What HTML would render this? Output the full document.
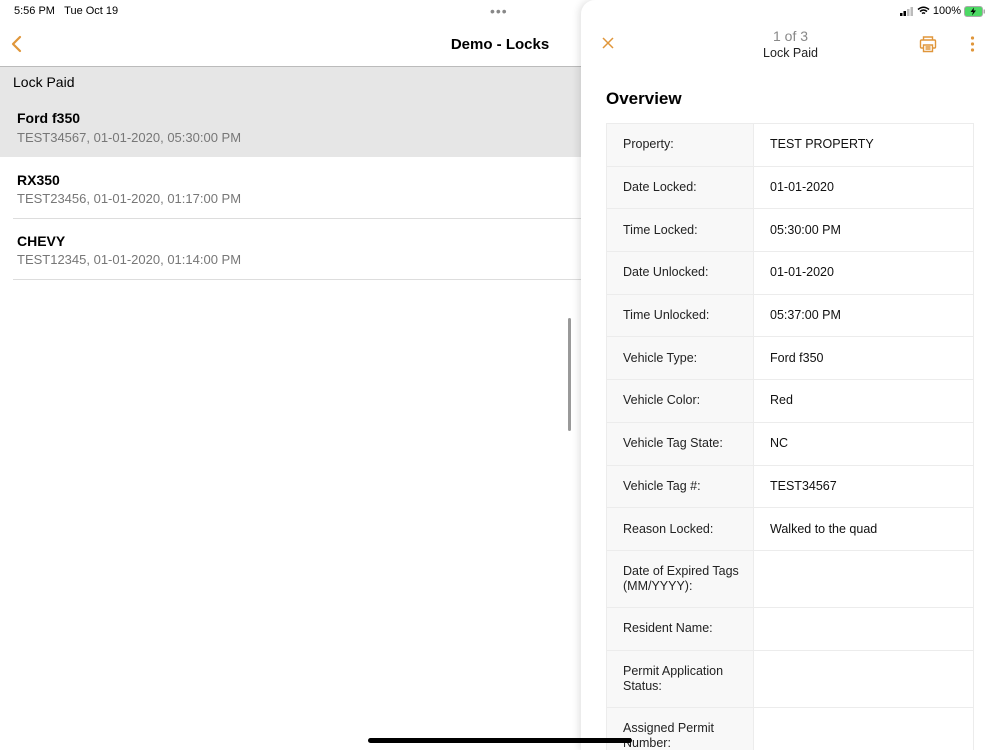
<!DOCTYPE html>
<html><head><meta charset="utf-8"><style>
*{margin:0;padding:0;box-sizing:border-box}
body{width:1000px;height:750px;overflow:hidden;background:#fff;font-family:"Liberation Sans",Helvetica,Arial,sans-serif;position:relative;color:#000}
.abs{position:absolute}
.row{position:absolute;left:0;width:581px;height:61px}
.row .t{position:absolute;left:17px;top:10px;font-size:14px;font-weight:bold}
.row .s{position:absolute;left:17px;top:30px;font-size:13px;color:#777}
.sep{position:absolute;left:13px;width:568px;height:1px;background:#ddd}
#panel{position:absolute;left:581px;top:0;width:419px;height:750px;overflow:hidden;background:#fff;border-top-left-radius:14px;box-shadow:-2px 0 8px rgba(0,0,0,.12)}
table{position:absolute;left:25px;top:123px;width:368px;border-collapse:collapse;font-size:12.5px;table-layout:fixed}
td{border:1px solid #ececec;padding:0 6px 0 16px;height:42.7px;vertical-align:middle;line-height:15px}
td.l{width:147px;background:#f8f8f8;color:#222}
td.v{color:#111}
</style></head><body>
<div class="abs" style="left:14px;top:5px;font-size:11px">5:56 PM&nbsp;&nbsp;&nbsp;Tue Oct 19</div>
<div class="abs" style="left:490px;top:3px;font-size:14px;color:#888;letter-spacing:1px">•••</div>
<svg class="abs" style="left:9px;top:35px" width="14" height="18" viewBox="0 0 14 18"><path d="M11 2 L4 9 L11 16" fill="none" stroke="#e0963a" stroke-width="2.2" stroke-linecap="round" stroke-linejoin="round"/></svg>
<div class="abs" style="left:0;width:1000px;top:36px;text-align:center;font-size:15px;font-weight:bold">Demo - Locks</div>
<div class="abs" style="left:0;top:66px;width:581px;height:1px;background:#bbb"></div>
<div class="abs" style="left:0;top:67px;width:581px;height:90px;background:#e6e6e6"></div>
<div class="abs" style="left:13px;top:74px;font-size:14px">Lock Paid</div>
<div class="row" style="top:100px"><div class="t">Ford f350</div><div class="s">TEST34567, 01-01-2020, 05:30:00 PM</div></div>
<div class="row" style="top:157px;background:#fff"><div class="t" style="top:15px">RX350</div><div class="s" style="top:34px">TEST23456, 01-01-2020, 01:17:00 PM</div></div>
<div class="sep" style="top:218px"></div>
<div class="row" style="top:218px"><div class="t" style="top:15px">CHEVY</div><div class="s" style="top:34px">TEST12345, 01-01-2020, 01:14:00 PM</div></div>
<div class="sep" style="top:279px"></div>
<div class="abs" style="left:568px;top:318px;width:3px;height:113px;background:#999;border-radius:2px"></div>
<div id="panel">
<div class="abs" style="right:14px;top:5px;font-size:11px;display:flex;align-items:center;gap:3px">
<svg width="14" height="9"><rect x="0" y="6" width="2.5" height="3" fill="#000"/><rect x="3.5" y="4" width="2.5" height="5" fill="#000"/><rect x="7" y="2" width="2.5" height="7" fill="#bbb"/><rect x="10.5" y="0" width="2.5" height="9" fill="#bbb"/></svg>
<svg width="13" height="10" viewBox="0 0 13 10"><path d="M1 3.5 Q6.5 -1 12 3.5 M3 5.5 Q6.5 2.5 10 5.5 M5 7.5 Q6.5 6.2 8 7.5" fill="none" stroke="#000" stroke-width="1.5"/></svg>
<span>100%</span>
<svg width="22" height="11"><rect x="0.5" y="0.5" width="18" height="10" rx="2.5" fill="#4cd964" stroke="#aaa"/><rect x="19.5" y="3.5" width="1.5" height="4" fill="#aaa"/><path d="M10 1.5 L6.5 6 H9 L8 9.5 L12 4.5 H9.5 Z" fill="#000"/></svg>
</div>
<svg class="abs" style="left:21px;top:37px" width="12" height="12"><path d="M1 1 L11 11 M11 1 L1 11" stroke="#e0963a" stroke-width="1.5"/></svg>
<div class="abs" style="left:0;width:419px;top:28px;text-align:center;font-size:14px;color:#888">1 of 3</div>
<div class="abs" style="left:0;width:419px;top:46px;text-align:center;font-size:12.5px;color:#222">Lock Paid</div>
<svg class="abs" style="left:338px;top:35px" width="18" height="18" viewBox="0 0 18 18"><path d="M4.5 5 V2 H13.5 V5 M4.5 13 H2.5 A1 1 0 0 1 1.5 12 V6 A1 1 0 0 1 2.5 5 H15.5 A1 1 0 0 1 16.5 6 V12 A1 1 0 0 1 15.5 13 H13.5 M4.5 10 H13.5 V16.5 H4.5 Z M6.5 12 H11.5 M6.5 14 H11.5" fill="none" stroke="#e0963a" stroke-width="1.4"/></svg>
<svg class="abs" style="left:389px;top:36px" width="5" height="17"><circle cx="2.5" cy="2" r="1.6" fill="#e0963a"/><circle cx="2.5" cy="8" r="1.6" fill="#e0963a"/><circle cx="2.5" cy="14" r="1.6" fill="#e0963a"/></svg>
<div class="abs" style="left:25px;top:89px;font-size:17px;font-weight:bold">Overview</div>
<table>
<tr><td class="l">Property:</td><td class="v">TEST PROPERTY</td></tr>
<tr><td class="l">Date Locked:</td><td class="v">01-01-2020</td></tr>
<tr><td class="l">Time Locked:</td><td class="v">05:30:00 PM</td></tr>
<tr><td class="l">Date Unlocked:</td><td class="v">01-01-2020</td></tr>
<tr><td class="l">Time Unlocked:</td><td class="v">05:37:00 PM</td></tr>
<tr><td class="l">Vehicle Type:</td><td class="v">Ford f350</td></tr>
<tr><td class="l">Vehicle Color:</td><td class="v">Red</td></tr>
<tr><td class="l">Vehicle Tag State:</td><td class="v">NC</td></tr>
<tr><td class="l">Vehicle Tag #:</td><td class="v">TEST34567</td></tr>
<tr><td class="l">Reason Locked:</td><td class="v">Walked to the quad</td></tr>
<tr><td class="l" style="height:57px">Date of Expired Tags<br>(MM/YYYY):</td><td class="v"></td></tr>
<tr><td class="l">Resident Name:</td><td class="v"></td></tr>
<tr><td class="l" style="height:57px">Permit Application<br>Status:</td><td class="v"></td></tr>
<tr><td class="l" style="height:57px">Assigned Permit<br>Number:</td><td class="v"></td></tr>
</table>
</div>
<div class="abs" style="left:368px;top:738px;width:264px;height:5px;background:#000;border-radius:3px"></div>
</body></html>
